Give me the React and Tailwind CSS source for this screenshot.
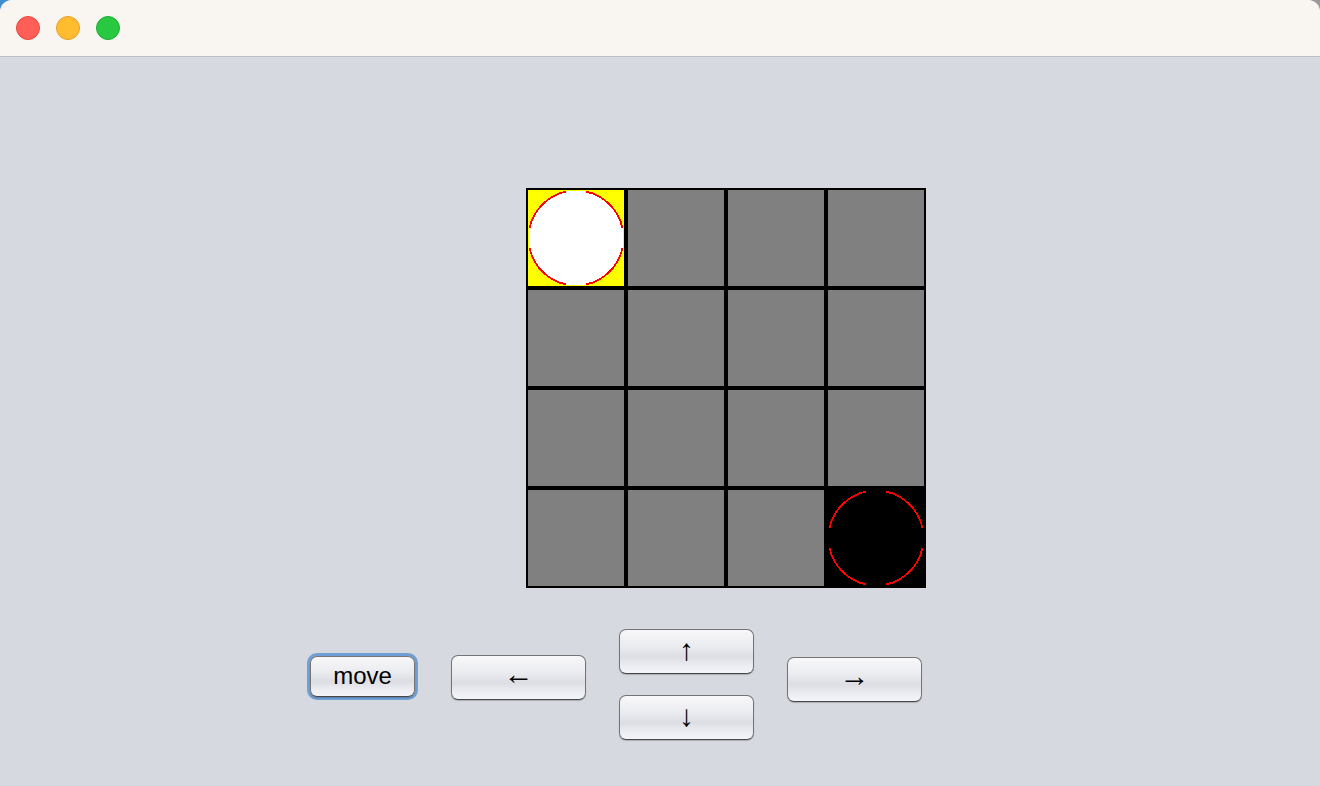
import React from 'react';

const board = [
  ['start', 'empty', 'empty', 'empty'],
  ['empty', 'empty', 'empty', 'empty'],
  ['empty', 'empty', 'empty', 'empty'],
  ['empty', 'empty', 'empty', 'goal'],
];

function Piece({ fill }) {
  return (
    <svg viewBox="0 0 96 96" className="block h-full w-full" shapeRendering="crispEdges">
      <circle
        cx="48"
        cy="48"
        r="47.5"
        fill={fill}
        stroke="#ff0000"
        strokeWidth="1.8"
        pathLength="400"
        strokeDasharray="74 26"
        strokeDashoffset="87"
      />
    </svg>
  );
}

function Cell({ kind }) {
  if (kind === 'start') {
    return (
      <div className="bg-[#ffff00]">
        <Piece fill="#ffffff" />
      </div>
    );
  }
  if (kind === 'goal') {
    return (
      <div className="bg-black">
        <Piece fill="#000000" />
      </div>
    );
  }
  return <div className="bg-[#808080]" />;
}

function AquaButton({ children, className = '' }) {
  return (
    <button
      className={
        'flex items-center justify-center rounded-[7px] border border-[#747474] border-b-[#474747] bg-[linear-gradient(180deg,#f8f8fa_0%,#eaebef_40%,#dcdee4_62%,#eceef4_85%,#f4f5f9_100%)] text-black shadow-[0_1px_1px_rgba(0,0,0,0.2)] ' +
        className
      }
    >
      {children}
    </button>
  );
}

const arrowBase = 'h-[45px] w-[135px] text-[30px] leading-none';

export default function App() {
  return (
    <div className="h-[786px] w-[1320px] overflow-hidden bg-[linear-gradient(90deg,#3f8ed0_0%,#7f8b98_50%,#9a9a9c_100%)]">
      <div className="flex h-full flex-col overflow-hidden rounded-t-[12px] bg-[#d6d9e0]">
        {/* Title bar */}
        <div className="flex h-[57px] shrink-0 items-center gap-[16px] border-b border-[#babdc3] bg-[#f9f6f1] pl-[16px]">
          <span className="h-[24px] w-[24px] rounded-full border border-[#e5483f] bg-[#ff5f57]" />
          <span className="h-[24px] w-[24px] rounded-full border border-[#e0a128] bg-[#febc2e]" />
          <span className="h-[24px] w-[24px] rounded-full border border-[#1eaa35] bg-[#28c840]" />
        </div>

        {/* Main content */}
        <main className="flex flex-1 flex-col pt-[131px]">
          <div className="pl-[526px]">
            <div className="grid h-[400px] w-[400px] grid-cols-4 grid-rows-4 gap-[4px] bg-black p-[2px]">
              {board.flat().map((kind, i) => (
                <Cell key={i} kind={kind} />
              ))}
            </div>
          </div>

          <div className="mt-[41px] flex items-start pl-[307px] font-['Liberation_Sans',Arial,sans-serif]">
            <div className="mt-[24px] rounded-[10px] border-[3px] border-[#6f9fd4]">
              <AquaButton className="h-[41px] w-[105px] pb-[1px] text-[24px] leading-none">move</AquaButton>
            </div>
            <AquaButton className={'ml-[33px] mt-[26px] pb-[7px] ' + arrowBase}>←</AquaButton>
            <div className="ml-[33px] flex flex-col gap-[21px]">
              <AquaButton className={'pb-[3px] ' + arrowBase}>↑</AquaButton>
              <AquaButton className={'pb-[3px] ' + arrowBase}>↓</AquaButton>
            </div>
            <AquaButton className={'ml-[33px] mt-[28px] pb-[7px] ' + arrowBase}>→</AquaButton>
          </div>
        </main>
      </div>
    </div>
  );
}
